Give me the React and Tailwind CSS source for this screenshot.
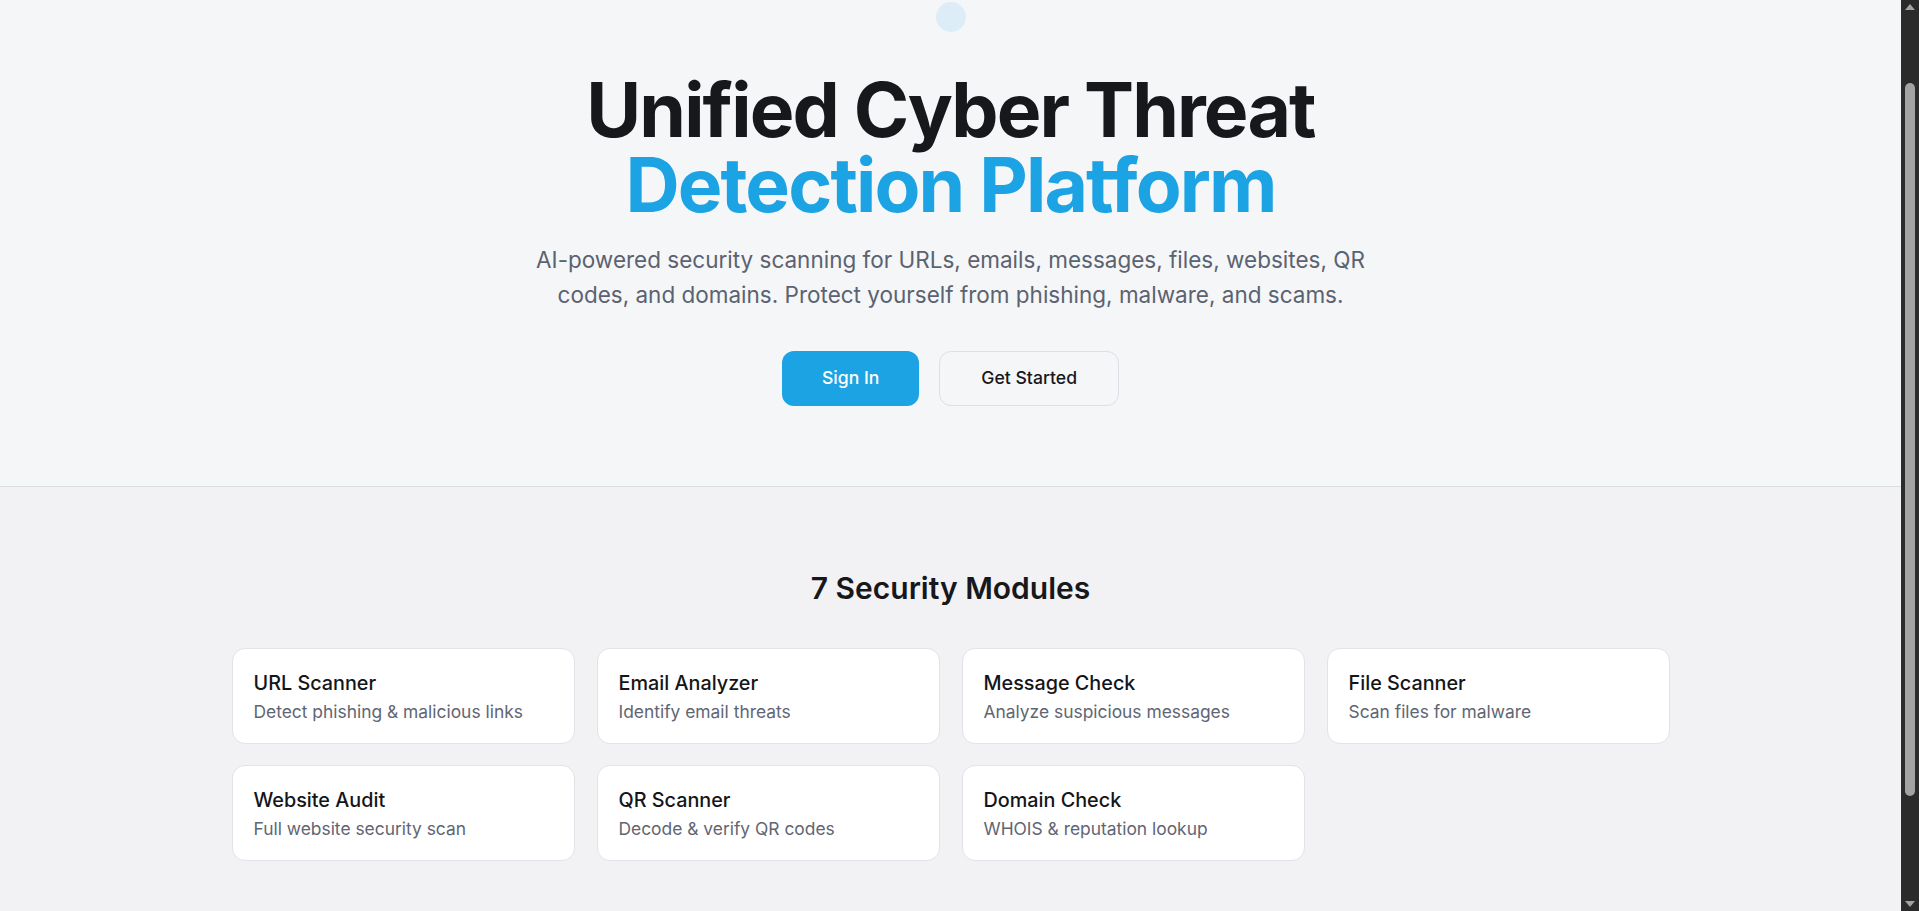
export default function App() {
  const modules = [
    { t: "URL Scanner", d: "Detect phishing & malicious links" },
    { t: "Email Analyzer", d: "Identify email threats" },
    { t: "Message Check", d: "Analyze suspicious messages" },
    { t: "File Scanner", d: "Scan files for malware" },
    { t: "Website Audit", d: "Full website security scan" },
    { t: "QR Scanner", d: "Decode & verify QR codes" },
    { t: "Domain Check", d: "WHOIS & reputation lookup" },
  ];
  return (
    <div className="flex h-screen overflow-hidden font-['Inter',sans-serif]">
      <div className="min-w-0 flex-1 bg-[#f2f2f5]">
        <section className="flex flex-col items-center border-b border-[#dcdde2] bg-[#f5f6f8] pt-[2px] pb-[80px]">
          <div className="h-[30px] w-[30px] rounded-full bg-[#ddedf8]" />
          <h1 className="mt-[40px] text-center text-[75px] font-bold leading-none tracking-tight text-[#17181c]">
            Unified Cyber Threat
            <br />
            <span className="text-[#1ba3e4]">Detection Platform</span>
          </h1>
          <p className="mt-[20px] max-w-[890px] text-center text-[22.5px] leading-[35px] text-[#5b6270]">
            AI-powered security scanning for URLs, emails, messages, files, websites, QR codes, and domains. Protect yourself from phishing, malware, and scams.
          </p>
          <div className="mt-[39px] flex gap-[20px]">
            <button className="h-[55px] rounded-[12px] bg-[#1ca3e4] px-[40px] text-[17.6px] font-medium text-white">
              Sign In
            </button>
            <button className="h-[55px] rounded-[12px] border border-[#dcdfe6] bg-[#f5f6f8] px-[41px] text-[17.6px] font-medium text-[#17181c]">
              Get Started
            </button>
          </div>
        </section>
        <section className="flex flex-col items-center pt-[81px] pb-[250px]">
          <h2 className="text-[30px] font-semibold leading-[40px] text-[#17181c]">7 Security Modules</h2>
          <div className="mt-[40px] grid w-full max-w-[1438px] grid-cols-4 gap-x-[22px] gap-y-[21px]">
            {modules.map((m) => (
              <div key={m.t} className="rounded-[13px] border border-[#e2e3e8] bg-white px-[21px] pt-[21px] pb-[20px]">
                <div className="text-[19.8px] font-medium leading-[27px] text-[#141519]">{m.t}</div>
                <div className="mt-[4px] text-[17.4px] leading-[22px] text-[#5f6673]">{m.d}</div>
              </div>
            ))}
          </div>
        </section>
      </div>
      <div className="flex w-[18px] shrink-0 flex-col items-center bg-[#2b2b2b] pt-[4px] pb-[4px]">
        <svg width="10" height="6" viewBox="0 0 10 6">
          <path d="M5 0 L10 6 L0 6 Z" fill="#a3a3a3" />
        </svg>
        <div className="mt-[73px] h-[713px] w-[10px] rounded-full bg-[#a3a3a3]" />
        <div className="flex-1" />
        <svg width="10" height="6" viewBox="0 0 10 6">
          <path d="M0 0 L10 0 L5 6 Z" fill="#a3a3a3" />
        </svg>
      </div>
    </div>
  );
}
